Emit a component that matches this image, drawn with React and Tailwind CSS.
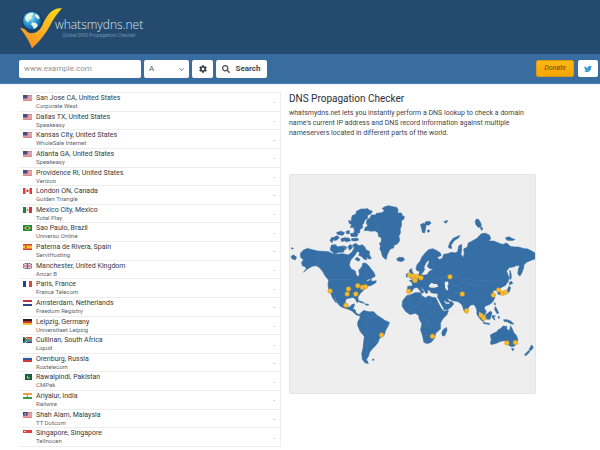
import React, { useState } from "react";
import { FaCog, FaSearch, FaTwitter } from "react-icons/fa";
import { ChevronDown } from "lucide-react";

const SERVERS = [
  { flag: "us", city: "San Jose CA, United States", provider: "Corporate West" },
  { flag: "us", city: "Dallas TX, United States", provider: "Speakeasy" },
  { flag: "us", city: "Kansas City, United States", provider: "WholeSale Internet" },
  { flag: "us", city: "Atlanta GA, United States", provider: "Speakeasy" },
  { flag: "us", city: "Providence RI, United States", provider: "Verizon" },
  { flag: "ca", city: "London ON, Canada", provider: "Golden Triangle" },
  { flag: "mx", city: "Mexico City, Mexico", provider: "Total Play" },
  { flag: "br", city: "Sao Paulo, Brazil", provider: "Universo Online" },
  { flag: "es", city: "Paterna de Rivera, Spain", provider: "ServiHosting" },
  { flag: "gb", city: "Manchester, United Kingdom", provider: "Ancar B" },
  { flag: "fr", city: "Paris, France", provider: "France Telecom" },
  { flag: "nl", city: "Amsterdam, Netherlands", provider: "Freedom Registry" },
  { flag: "de", city: "Leipzig, Germany", provider: "Universitaet Leipzig" },
  { flag: "za", city: "Cullinan, South Africa", provider: "Liquid" },
  { flag: "ru", city: "Orenburg, Russia", provider: "Rostelecom" },
  { flag: "pk", city: "Rawalpindi, Pakistan", provider: "CMPak" },
  { flag: "in", city: "Ariyalur, India", provider: "Railwire" },
  { flag: "my", city: "Shah Alam, Malaysia", provider: "TT Dotcom" },
  { flag: "sg", city: "Singapore, Singapore", provider: "Tellnocen" },
];

const RECORD_TYPES = ["A", "AAAA", "CNAME", "MX", "NS", "PTR", "SOA", "SRV", "TXT"];

const PINS = [
  [130, 363], [186, 357], [182, 372], [214, 347], [208, 372], [228, 352], [237, 350], [178, 406],
  [286, 496], [368, 364], [371, 315], [381, 318], [387, 328], [393, 319], [405, 323],
  [387, 331], [493, 320], [530, 372], [543, 423], [587, 437], [595, 445],
  [624, 375], [640, 360], [652, 370], [661, 367], [440, 500], [665, 520], [691, 519],
];

// Flags share an 18x12 canvas
const FLAGS = {
  us: (
    <>
      <path fill="#f3d9dc" d="M0 0h18v12H0z" />
      <path stroke="#c9505c" strokeWidth="1.2" d="M0 1h18M0 3.5h18M0 6h18M0 8.5h18M0 11h18" />
      <path fill="#454a86" d="M0 0h9v7H0z" />
    </>
  ),
  ca: (
    <>
      <path fill="#fff" d="M0 0h18v12H0z" />
      <path fill="#dc3a36" d="M0 0h5v12H0zM13 0h5v12h-5zM9 2l3 4-2 2H8L6 6z" />
    </>
  ),
  mx: (
    <>
      <path fill="#f5f1ea" d="M0 0h18v12H0z" />
      <path fill="#1d7a4c" d="M0 0h6v12H0z" />
      <path fill="#cf3540" d="M12 0h6v12h-6z" />
      <circle cx="9" cy="6" r="1.8" fill="#a08a5c" />
    </>
  ),
  br: (
    <>
      <path fill="#1f8b3b" d="M0 0h18v12H0z" />
      <path fill="#e3cf35" d="M9 1.5 16 6l-7 4.5L2 6z" />
      <circle cx="9" cy="6" r="2.5" fill="#2b4b82" />
    </>
  ),
  es: (
    <>
      <path fill="#d7402f" d="M0 0h18v12H0z" />
      <path fill="#f6c431" d="M0 3h18v6H0z" />
      <path fill="#b5652d" d="M4 4h3v4H4z" />
    </>
  ),
  gb: (
    <>
      <path fill="#4a4f8d" d="M0 0h18v12H0z" />
      <path stroke="#f3e6ea" strokeWidth="2.4" d="m0 0 18 12M18 0 0 12" />
      <path stroke="#f3e6ea" strokeWidth="4" d="M9 0v12M0 6h18" />
      <path stroke="#ce3a4c" strokeWidth="2" d="M9 0v12M0 6h18" />
    </>
  ),
  fr: (
    <>
      <path fill="#fff" d="M0 0h18v12H0z" />
      <path fill="#2b3f93" d="M0 0h6v12H0z" />
      <path fill="#e0443e" d="M12 0h6v12h-6z" />
    </>
  ),
  nl: (
    <>
      <path fill="#fff" d="M0 0h18v12H0z" />
      <path fill="#c5313f" d="M0 0h18v4H0z" />
      <path fill="#2b4a8c" d="M0 8h18v4H0z" />
    </>
  ),
  de: (
    <>
      <path fill="#262222" d="M0 0h18v4H0z" />
      <path fill="#d5302a" d="M0 4h18v4H0z" />
      <path fill="#f2c62f" d="M0 8h18v4H0z" />
    </>
  ),
  za: (
    <>
      <path fill="#d4483c" d="M0 0h18v6H0z" />
      <path fill="#30468f" d="M0 6h18v6H0z" />
      <path stroke="#fff" strokeWidth="5" fill="none" d="m0 0 8 6h10M0 12l8-6" />
      <path stroke="#217a52" strokeWidth="3" fill="none" d="m0 0 8 6h10M0 12l8-6" />
      <path fill="#222" d="m0 2 5 4-5 4z" />
    </>
  ),
  ru: (
    <>
      <path fill="#f1f1f4" d="M0 0h18v4H0z" />
      <path fill="#2f55a5" d="M0 4h18v4H0z" />
      <path fill="#d23a3a" d="M0 8h18v4H0z" />
    </>
  ),
  pk: (
    <>
      <path fill="#f3f6f3" d="M0 0h18v12H0z" />
      <path fill="#17603a" d="M4 0h14v12H4z" />
      <circle cx="11" cy="6" r="3" fill="#e7f0e8" />
      <circle cx="12" cy="5" r="2.5" fill="#17603a" />
    </>
  ),
  in: (
    <>
      <path fill="#fff" d="M0 0h18v12H0z" />
      <path fill="#f0a040" d="M0 0h18v4H0z" />
      <path fill="#3c9a46" d="M0 8h18v4H0z" />
      <circle cx="9" cy="6" r="1.5" fill="#50609b" />
    </>
  ),
  my: (
    <>
      <path fill="#f6dede" d="M0 0h18v12H0z" />
      <path stroke="#d14850" strokeWidth="1.2" d="M0 1h18M0 3.5h18M0 6h18M0 8.5h18M0 11h18" />
      <path fill="#2c3e87" d="M0 0h9v7H0z" />
      <circle cx="4.5" cy="3.5" r="1.8" fill="#dfc95b" />
    </>
  ),
  sg: (
    <>
      <path fill="#fff" d="M0 0h18v12H0z" />
      <path fill="#dc3f42" d="M0 0h18v6H0z" />
      <circle cx="4" cy="3" r="1.5" fill="#fff" />
    </>
  ),
};

const Flag = ({ code }) => (
  <svg viewBox="0 0 18 12" className="mt-[1px] h-[6px] w-[9px] shrink-0" aria-hidden="true">
    {FLAGS[code]}
  </svg>
);

const LogoMark = () => (
  <svg viewBox="0 0 126 126" className="h-[42px] w-[42px] shrink-0" aria-hidden="true">
    <defs>
      <linearGradient id="tick" x1="0" y1="1" x2="1" y2="0">
        <stop offset="0" stopColor="#f58a1f" />
        <stop offset="0.5" stopColor="#fbb024" />
        <stop offset="1" stopColor="#f8dc12" />
      </linearGradient>
      <radialGradient id="globe" cx="0.38" cy="0.3" r="0.75">
        <stop offset="0" stopColor="#c8f0fc" />
        <stop offset="0.45" stopColor="#38a8de" />
        <stop offset="1" stopColor="#0c4f93" />
      </radialGradient>
    </defs>
    <path fill="url(#tick)" d="M0 63c10 0 17 4 22 12 8 6 24 5 31-2 14-14 20-36 34-53C97 8 112 2 126 4 112 20 100 36 91 54 78 78 62 100 36 124 28 103 17 84 0 63z" />
    <circle cx="37" cy="43" r="32" fill="#173f64" />
    <circle cx="36" cy="41" r="27" fill="url(#globe)" />
    <path fill="#e7f4e2" d="M17 28c6-8 13-11 21-11l3 6-7 4 2 6-8 5-4 8-5-4-4-6zM37 46l11 2 6 7-6 8-7 3-3-8-5-6zM47 20l9 6 3 9-6 1-5-5-4-5z" />
  </svg>
);

const WorldMap = () => (
  <svg viewBox="9 12 741 660" className="block w-full" role="img" aria-label="Map of nameserver locations">
    <g fill="#366fa5" stroke="#366fa5" strokeWidth="2" strokeLinejoin="round">
      {/* North America */}
      <path d="M40 250L48 240 62 234 76 238 92 242 125 244 138 250 150 252 168 250 185 254 196 246 204 232 210 228 214 240 204 256 192 270 188 284 194 296 206 302 210 316 216 320 219 312 217 300 226 290 230 278 240 280 248 288 254 296 262 306 267 318 256 324 244 328 238 334 250 332 254 326 256 334 270 332 268 338 254 346 244 348 236 356 228 364 220 372 214 382 216 394 212 398 207 388 200 382 190 384 180 386 176 394 178 406 184 412 192 410 196 404 204 402 202 412 198 416 206 420 208 428 216 434 222 432 218 438 208 434 198 424 186 418 172 414 160 408 152 398 146 386 140 380 150 398 146 396 138 384 132 370 126 358 124 344 126 330 116 318 108 304 98 292 88 286 76 288 62 296 50 306 58 296 56 290 46 286 44 276 50 268 42 262z" />
      <path d="M12 258l8-4 9 7-4 7-9-2zM12 234l5-2 2 4z" />
      <path d="M130 238l5-14 12-1 6 7 14-3 7 8-3 10-14 1-13 5zM140 202l10-6 8 4-6 8-10 2zM130 210l6-10 5 3-5 14zM150 186l14-4 10 5-5 7-16-2zM163 205l11-3 14 1 4 8-12 3-6-3-9 2zM178 183l10-3 1 8-8 2zM184 228l9-6 5 10-9 7zM170 226l10 4-3 8zM196 204l18-1 2 6-12 3-9-3zM191 190l14-3 10 4-4 7-16 0zM200 172l10 4-3 6z" />
      <path d="M198 224l10-5 10 7 10-3 8 8 3 8 10 4 0 10 6 12-9 0-7-6 2 10-8-3-8-8-8-3 3-8-8-5-3-9-8-3z" />
      <path d="M205 266l8-5 8 7-5 5zM186 150l8 2 3-17 11-4 2-9 14-7 14 0 4-2 8 6 8 2-4 8-10 5-1 9-8 5-3 10-5 5 2 8-9 6 0 10-12 2-6-4 5-9-4-6-12 0 5-8-7-3z" />
      <path d="M234 180l3-10 8-3-5-10 2-10 9-5 4-9 12 0 4-5 17-2 6-7-6-6 8-5 12-3 12 3 12 2 4 8-2 9 12 0 3 8 6 3-2 8-7 4 0 15-4 10 1 12-5 10 3 13-7 10-11 5 0 7-11 4-5 9-4 8-3 14-6-3-6-8-3-12-4-8 2-11-4-4 7-9-1-11-8-3-2-12-9-5-11 1-11-2zM332 265l8-4 12 1 3 7-9 5-12-3z" />
      <path d="M212 392l14 3 9 5-12-2zM237 402l9 1 0 3-9-1z" />
      {/* South America */}
      <path d="M222 430L232 422 248 426 262 426 272 436 284 444 296 452 310 458 304 472 298 482 294 496 280 506 274 520 264 532 256 540 250 548 246 560 240 570 246 582 236 580 228 570 226 552 230 536 232 516 234 500 222 486 214 468 214 456 220 446zM258 570l5-1 0 3-5 0z" />
      {/* Africa */}
      <path d="M362 377L374 374 388 368 404 368 408 378 420 384 426 378 440 382 452 384 458 400 466 414 474 424 488 422 484 434 470 448 464 460 464 478 450 490 446 506 436 518 424 522 414 518 410 498 404 480 408 462 400 448 398 436 388 430 372 434 358 424 348 408 350 392zM482 473l2 8-7 17-6 1-3-7 3-11z" />
      {/* Europe and Asia */}
      <path d="M364 364L365 349 380 347 378 337 370 332 382 328 389 324 396 318 400 310 404 302 404 312 412 315 424 314 428 306 436 300 444 297 430 294 424 288 430 276 428 268 420 278 414 290 416 298 410 308 402 312 400 302 394 302 390 296 394 282 402 274 408 260 418 248 428 238 440 235 452 240 464 248 466 256 454 260 460 268 470 264 474 252 486 250 498 246 508 248 516 244 520 226 528 222 528 238 526 252 534 262 536 246 534 236 546 230 548 218 560 212 574 204 588 190 600 188 612 194 616 204 610 212 626 212 640 218 652 222 664 218 676 228 688 230 700 230 714 234 728 236 740 242 750 248 750 266 738 270 724 276 716 284 716 292 710 308 704 318 698 310 700 296 704 286 694 286 684 290 672 292 664 302 668 314 672 322 668 336 660 346 648 352 642 358 648 366 645 374 638 372 636 362 626 360 622 366 628 372 628 384 622 396 612 404 600 408 596 414 602 424 600 432 592 438 588 430 582 424 580 432 586 444 584 446 576 436 574 420 570 410 564 404 554 406 546 418 542 430 536 424 530 406 522 398 514 394 500 392 490 386 484 384 490 394 500 396 504 402 496 412 484 420 472 418 466 404 456 390 456 380 456 370 446 370 436 368 430 360 424 360 426 368 420 370 414 360 408 354 404 350 408 358 414 366 408 370 398 356 392 352 384 354 376 366z" />
      <path d="M370 300l7-5 1 9 7 11 2 6-14 4 4-8-5-5zM361 312l6-3 1 9-7 3zM404 162l9-4 8 4-2 10-3 15-6-1-3-12zM418 154l12-2 6 5-8 7-9-3zM424 180l6-2 1 5-5 2zM474 153l12-3-5 8zM488 230l5-14 9-12 20-9-2 6-14 9-10 14 2 10-8-1zM569 154l3-8 7 0 7 12 2 9-9 4-7-8zM584 170l8 2-3 8zM661 202l11-3 8 5 9 3-7 3-17-1z" />
      {/* Japan, south east Asia, Oceania */}
      <path d="M673 336l7-2 2 6-9 4zM672 348l4 5-4 13-13 6-3-4 10-8zM674 300l4 13 0 12-4 3zM626 402l3-4 1 7zM630 410l5 8 5 12-5 1-7-13zM574 428l9 7 11 14 1 6-6-2-11-14zM599 437l7-6 9-7 5 4-3 11-3 9-11 0zM594 458l19 3-1 3-18-3zM620 438l10 0-4 5 3 8-7-6zM655 450l10 0 12 4 9 9-10-1-9-6-9-1zM638 441l4-2-1 8z" />
      <path d="M615 496l11-6 8-3 4-6 9-5 6-7 12 1-1 8 9 5 3-15 6 11 4 10 8 9 4 12-3 12-8 8-9 1-10-6-4-7-7-5-11 2-13 6-15 4-3-5 3-9zM679 537l7 0-3 7zM740 526l5 8-7 9-6-3zM731 543l4 3-12 12-5-2z" />
    </g>
    {/* inland seas */}
    <g fill="#eeeeee">
      <path d="M429 346l8-8 8 4 8 0 5 7-12 4-15-1zM477 336l9-2 3 8-4 4 3 12-5 3-5-8z" />
      <path d="M451 384l5 0 18 33-3 3zM474 391l10 7 8 0-3 4-9-1z" />
    </g>
    {/* borders */}
    <g fill="none" stroke="#5488b8" strokeWidth="1">
      <path d="M94 244v38l8 8M125 328h72l16 10 14 0 12-3M130 366l18 3 18 10" />
      <path d="M240 425l4 14 14 5M222 445l14 8 8 10-4 10 17 10 10 12M236 480l10 22-6 55M262 500l8 12M262 430v10l14 2" />
      <path d="M360 395l27 15 20-16-2-20M387 410v18M412 378l14 24M426 402h32M435 382v20M408 398l-2 20 20 6 16 16M372 412v18M404 448h20l8 22h-24M432 470l24-10M415 498h25l10-10M445 420l4 20 16 8" />
      <path d="M428 310l8 10 8 8 20-2 8 10M465 322l26-8 30 6 12 10M533 330l20-4 22 8 26-4 20 8 22-10 12 12M533 330l-8 14-30 6M533 330l22 14 34 4 20-10M500 365l16 4 8-14 18 10 20 16M516 369l8 12-4 12M560 384l14 8 8-6 14 14M462 366l14 8 10 10M410 318l6 14M388 326l8 14" />
    </g>
    <g fill="#f5bb2c" stroke="#d99b25" strokeWidth="1.5">
      {PINS.map(([x, y]) => (
        <circle key={`${x}-${y}`} cx={x} cy={y} r="7" />
      ))}
    </g>
  </svg>
);

const Header = () => (
  <header className="flex h-[54px] items-start bg-[#244b6f] pl-5 pt-[7px]">
    <a href="#" className="flex items-start text-[#dbe6ef]">
      <LogoMark />
      <span className="-ml-[7px] flex flex-col items-center pt-[11px]">
        <span className="font-['Open_Sans',sans-serif] text-[12px] font-light leading-[14px]">whatsmydns.net</span>
        <span className="text-[5px] leading-[6px] text-[#6f90ad]">Global DNS Propagation Checker</span>
      </span>
    </a>
  </header>
);

const SearchBar = () => {
  const [domain, setDomain] = useState("");
  const [type, setType] = useState("A");

  const handleSubmit = (e) => {
    e.preventDefault();
  };

  return (
    <div className="flex h-[30px] items-center justify-between border-b border-[#4f83b5] bg-[#396d9f] pl-[19px] pr-[2px]">
      <form onSubmit={handleSubmit} className="flex items-center gap-[3px]">
        <input
          type="text"
          aria-label="Domain name"
          placeholder="www.example.com"
          value={domain}
          onChange={(e) => setDomain(e.target.value)}
          className="h-[18px] w-[122px] rounded-xs bg-white px-[5px] text-[8px] text-gray-700 outline-none placeholder:text-[#8d9298]"
        />
        <div className="relative">
          <select
            aria-label="Record type"
            value={type}
            onChange={(e) => setType(e.target.value)}
            className="block h-[18px] w-[45px] appearance-none rounded-xs bg-white px-[5px] text-[8px] text-[#555b61]"
          >
            {RECORD_TYPES.map((t) => (
              <option key={t}>{t}</option>
            ))}
          </select>
          <ChevronDown size={7} strokeWidth={3} className="pointer-events-none absolute right-[4px] top-[6px] text-[#555b61]" />
        </div>
        <button type="button" aria-label="Settings" className="flex h-[18px] w-[21px] items-center justify-center rounded-xs bg-white text-[#3e4349]">
          <FaCog size={8} />
        </button>
        <button type="submit" className="flex h-[18px] w-[51px] items-center justify-center gap-[5px] rounded-xs bg-white text-[8px] font-bold text-[#43484e]">
          <FaSearch size={8} />
          Search
        </button>
      </form>
      <div className="flex items-center gap-[4px]">
        <a href="#" className="flex h-[17px] w-[38px] items-center justify-center rounded-xs border border-[#d99a1b] bg-linear-to-b from-[#fcb813] to-[#f6a500] text-[7px] italic text-[#5f4a17]">
          Donate
        </a>
        <a href="#" aria-label="Twitter" className="flex h-[17px] w-[20px] items-center justify-center rounded-xs bg-white text-[#3e9bd3]">
          <FaTwitter size={8} />
        </a>
      </div>
    </div>
  );
};

const ServerList = () => (
  <ul className="grid auto-rows-fr border-r border-t border-[#eeeeee] h-[355px]">
    {SERVERS.map((server) => (
      <li key={server.city} className="flex gap-[4px] border-b border-[#eeeeee] pl-[4px] pr-[5px] pt-[1px]">
        <Flag code={server.flag} />
        <div className="min-w-0 flex-1">
          <p className="text-[7px] leading-[8px] text-[#34393e]">{server.city}</p>
          <p className="text-[6px] leading-[8px] text-[#5f6469]">{server.provider}</p>
        </div>
        <span className="self-center text-[6px] leading-[8px] text-[#777c80]">-</span>
      </li>
    ))}
  </ul>
);

const App = () => {
  return (
    <div className="h-screen overflow-hidden bg-white font-[Roboto,'Liberation_Sans',sans-serif]">
      <Header />
      <SearchBar />
      <main className="grid grid-cols-[262fr_247fr_51fr] gap-x-[8px] border-t border-[#e3f2fd] pl-[19px] pr-[5px] pt-[7px]">
        <div>
          <ServerList />
        </div>
        <div className="min-w-0">
          <h1 className="text-[10px] leading-[14px] text-[#2a2f34]">DNS Propagation Checker</h1>
          <p className="mt-[2px] pr-2 text-[7px] leading-[10px] text-[#3f4449]">
            whatsmydns.net lets you instantly perform a DNS lookup to check a domain name's current IP address and DNS record information against multiple nameservers located in different parts of the world.
          </p>
          <div className="mt-[36px] overflow-hidden rounded-xs border border-[#e4e4e4] bg-[#eeeeee]">
            <WorldMap />
          </div>
        </div>
      </main>
    </div>
  );
};

export default App;
